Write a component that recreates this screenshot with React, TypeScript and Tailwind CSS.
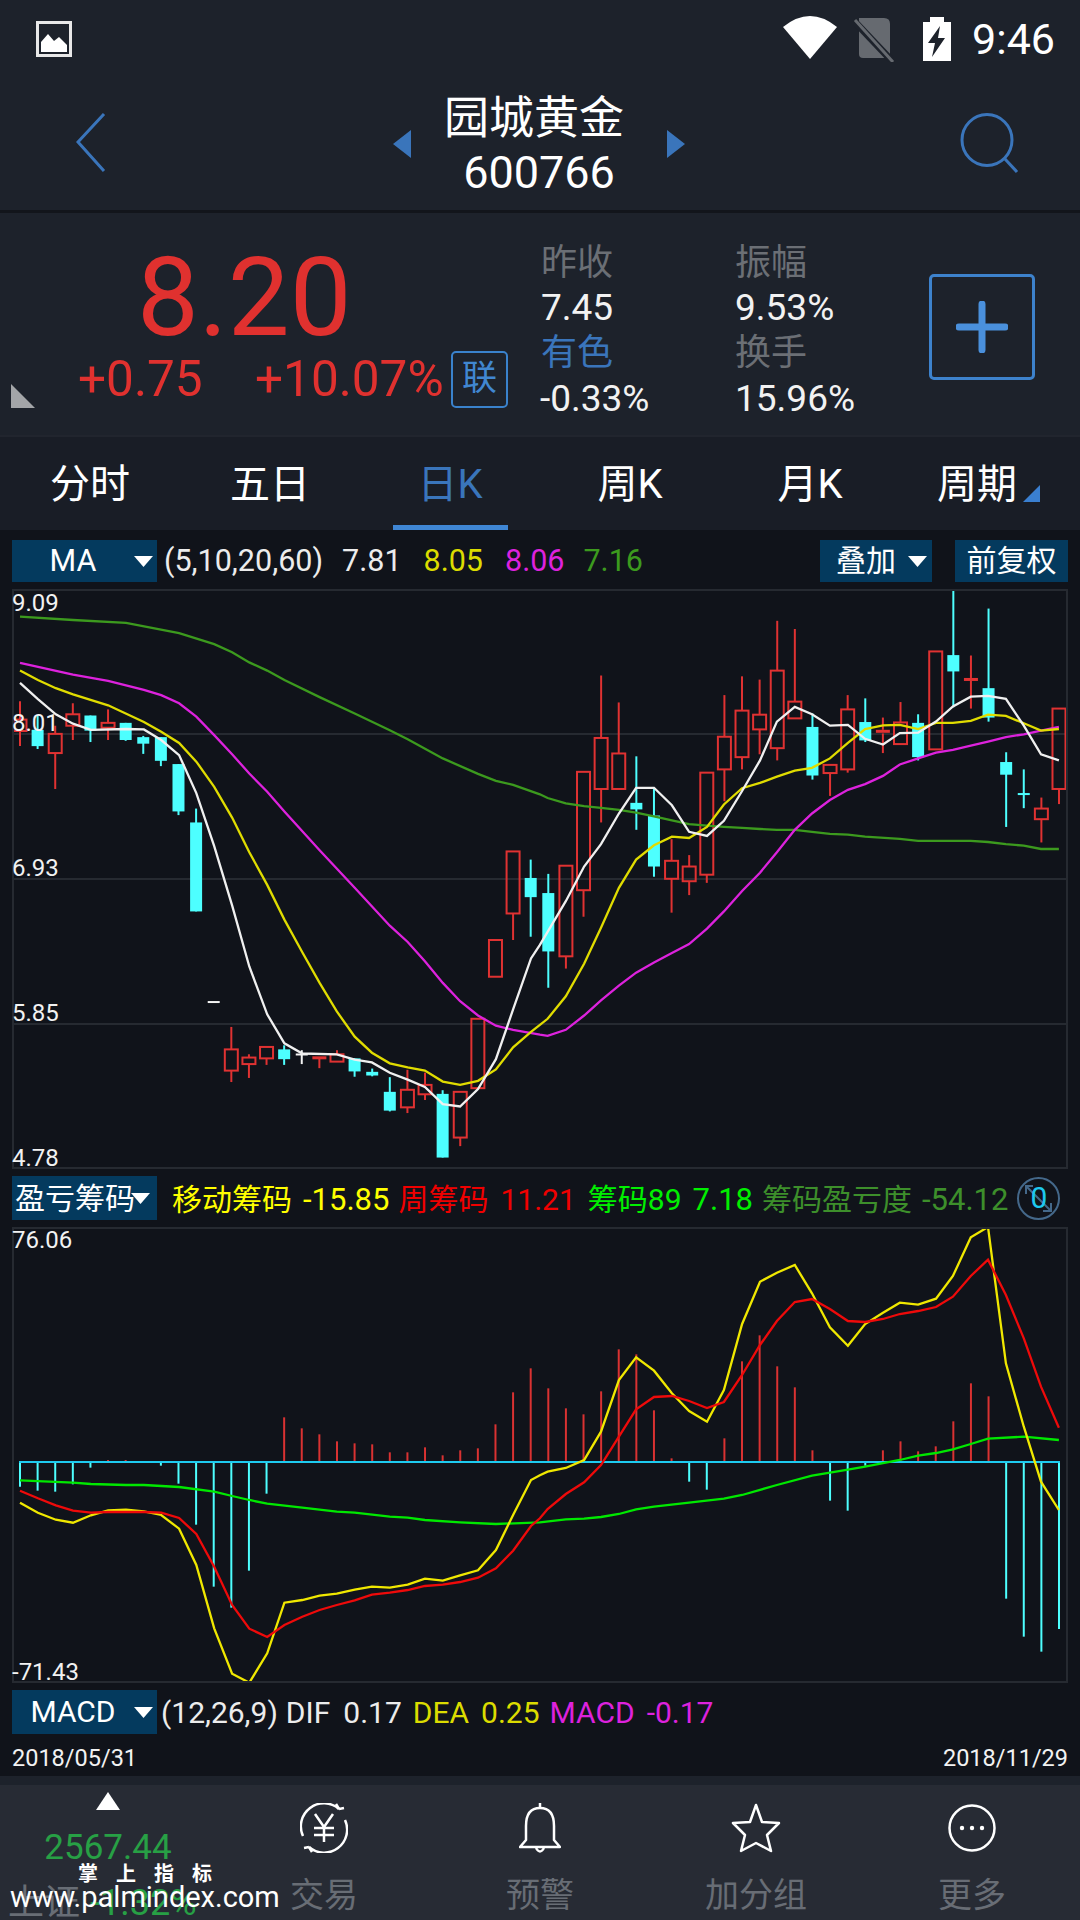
import React from "react";

const ix = (i: number) => 20 + 17.61 * i;
const xl = (z: number) => z / 2.904;
const xr = (z: number) => 540 + z / 2.904;
const y1 = (z: number) => 540 + z / 2.45;
const y2 = (z: number) => 1170 + z / 3;

type C = [number, number, number, number, "r" | "c" | "w"];
const candles: C[] = [
  [395,505,440,468,"r"],[430,512,465,505,"c"],[455,610,475,522,"r"],[400,490,427,455,"r"],[430,495,430,467,"c"],
  [415,490,448,460,"r"],[448,492,448,490,"c"],[480,524,483,499,"c"],[483,554,483,541,"c"],[549,674,549,665,"c"],
  [658,910,692,910,"c"],[1130,1134,1130,1134,"w"],[1193,1328,1248,1300,"r"],[1260,1318,1268,1284,"r"],[1242,1286,1242,1270,"r"],
  [1238,1286,1248,1272,"c"],[1250,1284,1259,1262,"w"],[1265,1294,1265,1270,"r"],[1250,1278,1260,1278,"r"],[1270,1315,1270,1302,"c"],
  [1295,1314,1303,1312,"c"],[1316,1400,1352,1398,"c"],[1298,1404,1347,1390,"r"],[1305,1372,1335,1358,"r"],[1348,1513,1357,1513,"c"],
  [1352,1485,1352,1464,"r"],[1173,1343,1173,1343,"r"],[980,1070,980,1070,"r"],[763,980,763,915,"r"],[783,972,828,875,"c"],
  [818,1097,865,1008,"c"],[798,1050,798,1020,"r"],[568,923,568,858,"r"],[332,692,485,610,"r"],[398,610,523,610,"r"],
  [530,710,644,660,"c"],[610,825,675,800,"c"],[733,913,786,830,"r"],[772,870,800,836,"r"],[570,840,570,820,"r"],
  [380,640,482,562,"r"],[334,562,418,532,"r"],[342,525,428,464,"r"],[198,540,320,510,"r"],[218,437,396,437,"r"],
  [425,587,458,577,"c"],[551,627,551,571,"r"],[380,570,415,562,"r"],[388,495,446,491,"c"],[435,522,465,474,"r"],
  [397,500,447,500,"r"],[427,540,448,532,"c"],[273,513,273,513,"r"],[120,410,282,322,"c"],[283,413,338,344,"r"],
  [168,445,363,435,"c"],[520,703,544,575,"c"],[562,657,620,624,"c"],[631,741,658,684,"r"],[413,647,413,610,"r"],
];

const pts = (left: number[], right: number[], fy: (z: number) => number) => {
  const out: string[] = [];
  for (let i = 0; i < left.length; i += 2) out.push(`${xl(left[i]).toFixed(1)},${fy(left[i + 1]).toFixed(1)}`);
  for (let i = 0; i < right.length; i += 2) out.push(`${xr(right[i]).toFixed(1)},${fy(right[i + 1]).toFixed(1)}`);
  return out.join(" ");
};

const maLines: [string, number[], number[]][] = [
  ["#3c9a1e",[58,188,212,196,366,203,520,228,622,255,674,275,724,300,776,320,826,343,928,385,1030,425,1132,466,1184,488,1286,535,1388,573,1440,590,1490,600,1568,623],
   [22,632,75,645,128,652,177,656,229,661,279,668,331,677,383,687,433,696,485,700,534,703,587,705,639,708,688,710,740,710,790,715,842,720,894,722,944,727,1045,732,1098,737,1150,737,1251,737,1301,740,1353,745,1405,749,1455,757,1507,757]],
  ["#dd22dd",[58,301,212,330,314,345,418,367,468,380,520,400,570,433,622,478,674,525,724,572,776,617,826,665,928,760,1030,852,1132,945,1184,985,1234,1032,1286,1085,1336,1130,1388,1165,1440,1190,1490,1200,1568,1212],
   [22,1215,75,1200,128,1165,177,1128,229,1092,279,1060,331,1035,383,1012,433,990,485,952,534,910,587,860,639,815,688,765,740,710,790,670,842,637,894,612,944,598,996,578,1045,550,1098,535,1150,521,1199,514,1251,504,1301,494,1353,483,1405,476,1455,467,1507,458]],
  ["#e0dc00",[58,320,110,343,162,363,212,378,314,405,418,446,468,470,520,497,570,543,622,605,674,680,724,765,776,845,826,930,878,1010,928,1085,978,1155,1030,1217,1080,1256,1132,1282,1184,1292,1234,1300,1286,1327,1336,1335,1388,1325,1440,1297,1490,1243,1542,1205,1568,1188],
   [22,1173,75,1118,128,1038,177,950,229,852,279,783,331,748,383,727,433,730,485,703,534,648,587,608,639,595,688,580,740,565,790,558,842,535,894,497,944,463,996,454,1045,453,1098,463,1150,448,1199,448,1251,443,1301,428,1353,431,1405,449,1455,467,1507,463]],
  ["#f0f0f0",[58,350,110,390,162,427,212,450,264,465,366,463,418,464,468,490,520,527,570,620,622,750,674,895,724,1045,776,1162,826,1233,878,1258,978,1260,1030,1273,1080,1280,1132,1305,1184,1322,1234,1340,1286,1382,1336,1388,1388,1345,1440,1272,1490,1150,1542,1025,1568,992],
   [22,960,75,885,128,800,177,745,229,670,279,607,331,607,383,650,433,715,485,725,534,688,587,615,639,540,688,445,740,409,790,427,842,455,894,453,944,487,996,501,1045,473,1098,472,1150,445,1199,408,1251,384,1301,382,1353,389,1405,455,1455,525,1507,540]],
];

const macdLines: [string, number[], number[]][] = [
  ["#00e800",[58,931,212,938,264,942,366,945,418,945,520,951,622,965,674,978,724,990,776,1001,878,1013,978,1025,1030,1028,1132,1040,1184,1043,1234,1050,1336,1057,1440,1062,1568,1057],
   [75,1048,128,1046,177,1041,229,1032,279,1018,331,1010,433,998,534,986,587,975,688,945,790,917,894,899,944,890,1045,870,1098,857,1150,849,1199,838,1251,822,1301,806,1405,800,1507,810]],
  ["#f0e800",[58,998,110,1028,162,1049,212,1058,264,1036,314,1021,366,1019,418,1024,468,1035,520,1076,570,1185,622,1375,674,1511,724,1538,776,1450,826,1298,878,1290,928,1277,978,1271,1030,1259,1080,1250,1132,1253,1184,1244,1234,1226,1286,1232,1336,1216,1388,1201,1440,1140,1490,1035,1542,930,1568,916],
   [22,905,75,894,128,870,177,785,229,630,279,562,331,602,383,670,433,723,485,755,534,660,587,462,639,335,688,308,740,285,790,370,842,472,894,527,944,462,996,428,1045,398,1098,404,1150,386,1199,318,1251,202,1301,171,1353,580,1405,770,1455,935,1507,1020]],
  ["#ee0a0a",[58,962,110,985,162,1006,212,1022,264,1028,314,1026,418,1026,468,1028,520,1044,570,1092,622,1190,674,1305,724,1376,776,1401,826,1365,878,1340,928,1320,978,1305,1030,1291,1080,1274,1132,1268,1184,1260,1234,1248,1286,1244,1336,1236,1388,1223,1440,1195,1490,1142,1542,1068,1568,1045],
   [22,1017,75,972,128,937,177,885,229,800,279,718,331,681,383,678,433,693,485,714,534,696,587,615,639,525,688,453,740,396,790,387,842,417,894,453,944,456,996,447,1045,432,1098,423,1150,411,1199,380,1251,318,1301,269,1353,375,1405,505,1455,650,1507,773]],
];

const hist = [950,962,965,943,893,870,870,876,887,941,1064,1250,1313,1202,971,742,775,793,814,820,823,847,847,832,856,841,835,763,667,595,
  655,715,733,664,538,553,721,865,935,959,805,574,496,589,652,841,992,1022,887,841,814,844,829,754,640,679,1286,1400,1445,1377];

const RED = "#e03232";
const CYAN = "#4dffff";

function Candles() {
  return (
    <>
      {candles.map(([wt, wb, bt, bb, k], i) => {
        const x = ix(i);
        if (k === "w") {
          return (
            <g key={i} stroke="#f4f4f4" strokeWidth={2}>
              {wb - wt > 10 && <line x1={x} x2={x} y1={y1(wt)} y2={y1(wb)} />}
              <line x1={x - 6} x2={x + 6} y1={y1((bt + bb) / 2)} y2={y1((bt + bb) / 2)} />
            </g>
          );
        }
        if (k === "c") {
          return (
            <g key={i}>
              <line x1={x} x2={x} y1={y1(wt)} y2={y1(wb)} stroke={CYAN} strokeWidth={2} />
              <rect x={x - 6} y={y1(bt)} width={12} height={Math.max(y1(bb) - y1(bt), 2)} fill={CYAN} />
            </g>
          );
        }
        const thin = bb - bt < 10;
        return (
          <g key={i} stroke={RED} strokeWidth={2}>
            {wt < bt && <line x1={x} x2={x} y1={y1(wt)} y2={y1(bt)} />}
            {wb > bb && <line x1={x} x2={x} y1={y1(bb)} y2={y1(wb)} />}
            {thin ? (
              <rect x={x - 7} y={y1(bt)} width={14} height={3} fill={RED} stroke="none" />
            ) : (
              <rect x={x - 6.5} y={y1(bt)} width={13} height={y1(bb) - y1(bt)} fill="none" />
            )}
          </g>
        );
      })}
    </>
  );
}

function Caret({ className }: { className: string }) {
  return (
    <svg width="19" height="12" viewBox="0 0 19 12" className={`block ${className}`}>
      <path d="M0 1 H19 L9.5 12 Z" fill="#fff" />
    </svg>
  );
}

function DropBox({ label, textW }: { label: string; textW: string }) {
  return (
    <div className="w-[145px] h-full bg-[#043a5e] flex items-center text-white shrink-0">
      <span className={`${textW} text-center`}>{label}</span>
      <Caret className="shrink-0" />
    </div>
  );
}

function StatusIcons() {
  return (
    <div className="flex items-center">
      <svg width="56" height="44" viewBox="0 0 56 44" className="block mb-[2px]">
        <path d="M28 43 L1 11 Q28 -11 55 11 Z" fill="#fff" />
      </svg>
      <svg width="42" height="46" viewBox="0 0 42 46" className="ml-[15px] block">
        <path d="M6 2 H31 Q37 2 37 8 V38 Q37 42 33 42 H10 Q6 42 6 38 Z" fill="#666a70" />
        <path d="M1 5 L38 44" stroke="#1d222b" strokeWidth="7" />
        <path d="M2 4 L40 46" stroke="#666a70" strokeWidth="3" />
      </svg>
      <svg width="30" height="44" viewBox="0 0 30 44" className="ml-[27px] block">
        <path d="M8 0 H22 V5 H29 V44 H1 V5 H8 Z" fill="#fff" />
        <path d="M18 9 L6 26 H13 L10 40 L23 21 H16 Z" fill="#1d222b" />
      </svg>
    </div>
  );
}

function Panel({ h, top, inner, labels, children }: { h: string; top: number; inner: number; labels: [string, string][]; children: React.ReactNode }) {
  return (
    <div className={`${h} relative mx-[12px] border-2 border-[#262a31]`}>
      <svg width="1052" height={inner} viewBox={`14 ${top + 2} 1052 ${inner}`} className="block">
        {children}
      </svg>
      {labels.map(([t, cls]) => (
        <span key={t} className={`absolute left-[-2px] text-[24px] leading-[28px] text-[#f2f2f2] ${cls}`}>{t}</span>
      ))}
    </div>
  );
}

function Nav({ label, children }: { label: string; children: React.ReactNode }) {
  return (
    <div className="w-[216px] flex flex-col items-center pt-[17px]">
      <div className="h-[52px] flex items-center justify-center shrink-0">{children}</div>
      <span className="mt-[21px] text-[34px] leading-[40px] text-[#686d75] shrink-0">{label}</span>
    </div>
  );
}

export default function App() {
  return (
    <div className="w-[1080px] h-[1920px] overflow-hidden bg-[#1d222b] flex flex-col [font-family:Roboto,'Noto_Sans_CJK_SC',sans-serif]">
      {/* status bar */}
      <div className="h-[78px] shrink-0 flex items-center justify-between pl-[36px] pr-[25px]">
        <svg width="36" height="36" viewBox="0 0 36 36" className="block">
          <rect x="1.5" y="1.5" width="33" height="33" fill="none" stroke="#e8e8e8" strokeWidth="3" />
          <rect x="5" y="25" width="26" height="6" fill="#fff" />
          <path d="M5 26 V21 L12 13 L18 20 L23 16 L31 24 V26 Z" fill="#fff" />
        </svg>
        <div className="flex items-center">
          <StatusIcons />
          <span className="ml-[20px] text-[43px] leading-[44px] text-white">9:46</span>
        </div>
      </div>

      {/* title */}
      <div className="h-[135px] shrink-0 flex items-center pl-[76px] pr-[60px] border-b-[3px] border-[#12151b]">
        <svg width="30" height="60" viewBox="0 0 30 60" className="block shrink-0 mb-[2px]">
          <path d="M28 1 L2 29 L28 58" fill="none" stroke="#3a75bb" strokeWidth="3" />
        </svg>
        <div className="flex-1 flex items-center justify-center ml-[12px]">
          <svg width="20" height="28" viewBox="0 0 20 28" className="block"><path d="M19 0 V28 L1 14 Z" fill="#3a75bb" /></svg>
          <div className="w-[254px] flex flex-col items-center text-white mt-[3px]">
            <span className="text-[45px] leading-[52px] mr-[10px]">园城黄金</span>
            <span className="text-[45px] leading-[52px] mt-[2px]">600766</span>
          </div>
          <svg width="20" height="28" viewBox="0 0 20 28" className="block"><path d="M1 0 V28 L19 14 Z" fill="#3a75bb" /></svg>
        </div>
        <svg width="60" height="60" viewBox="0 0 60 60" className="block shrink-0 mb-[2px]">
          <ellipse cx="27" cy="27" rx="25" ry="25.5" fill="none" stroke="#3a75bb" strokeWidth="3" />
          <path d="M45 46 L57 59" stroke="#3a75bb" strokeWidth="3" />
        </svg>
      </div>

      {/* quote */}
      <div className="h-[222px] shrink-0 relative flex">
        <svg width="24" height="24" viewBox="0 0 24 24" className="absolute left-[11px] top-[171px] block">
          <path d="M0 0 L24 24 H0 Z" fill="#a3a5a8" />
        </svg>
        <div className="w-[541px] pl-[78px] pt-[40px] shrink-0">
          <div className="pl-[59px] h-[90px] text-[110px] leading-[90px] text-[#e0312f]">8.20</div>
          <div className="mt-[6px] h-[60px] flex items-center text-[#e0312f] text-[49.5px]">
            <span className="w-[124px] leading-[60px]">+0.75</span>
            <span className="ml-[53px] w-[187px] leading-[60px] whitespace-nowrap">+10.07%</span>
            <span className="ml-[9px] w-[57px] h-[57px] rounded-[5px] border-2 border-[#3a82cc] flex items-center justify-center text-[35px] leading-[40px] text-[#4187d1] shrink-0">联</span>
          </div>
        </div>
        <div className="w-[388px] shrink-0 pt-[27px] grid grid-cols-[194px_194px] auto-rows-[45.33px] items-center text-[#f2f2f2] text-[37px] leading-[42px]">
          <span className="text-[36px] text-[#6b6f75]">昨收</span>
          <span className="text-[36px] text-[#6b6f75]">振幅</span>
          <span>7.45</span>
          <span>9.53%</span>
          <span className="text-[36px] text-[#3a75bb]">有色</span>
          <span className="text-[36px] text-[#6b6f75]">换手</span>
          <span className="-ml-[1px]">-0.33%</span>
          <span>15.96%</span>
        </div>
        <div className="mt-[61px] w-[106px] h-[106px] rounded-[5px] border-[3px] border-[#3d82cc] flex items-center justify-center shrink-0">
          <svg width="52" height="52" viewBox="0 0 52 52" className="block">
            <path d="M26 3 V49 M3 26 H49" stroke="#4a90dc" strokeWidth="7" strokeLinecap="round" />
          </svg>
        </div>
      </div>

      {/* tabs */}
      <div className="h-[95px] shrink-0 bg-[#191d26] border-t-2 border-[#21252e] flex relative">
        {["分时", "五日", "日K", "周K", "月K"].map((t, i) => (
          <div key={t} className={`w-[180px] flex justify-center items-center text-[40px] pt-[2px] ${i === 2 ? "text-[#3a75bb]" : "text-white"}`}>{t}</div>
        ))}
        <div className="flex-1 flex items-center text-[40px] text-white pl-[37px] pt-[2px]">
          <span className="whitespace-nowrap">周期</span>
          <svg width="17" height="17" viewBox="0 0 17 17" className="block mt-[18px] ml-[6px] shrink-0"><path d="M17 0 V17 H0 Z" fill="#3a7fd0" /></svg>
        </div>
        <div className="absolute left-[393px] bottom-0 w-[115px] h-[5px] bg-[#3f86d4]" />
      </div>

      {/* chart block */}
      <div className="h-[1246px] shrink-0 bg-[#10131a] flex flex-col pt-[10px]">
        <div className="h-[42px] mx-[12px] flex items-center text-[30.5px] leading-[42px] whitespace-nowrap">
          <DropBox label="MA" textW="w-[122px]" />
          <span className="ml-[7px] text-[#ececec]">(5,10,20,60)</span>
          <span className="ml-[19px] text-[#ececec]">7.81</span>
          <span className="ml-[22px] text-[#dcdc00]">8.05</span>
          <span className="ml-[22px] text-[#dd22dd]">8.06</span>
          <span className="ml-[19px] text-[#3c9a1e]">7.16</span>
          <div className="ml-auto h-full w-[112px] bg-[#043a5e] flex items-center text-white shrink-0 text-[30px]">
            <span className="w-[76px] text-right">叠加</span>
            <Caret className="ml-[12px] shrink-0" />
          </div>
          <div className="ml-[23px] h-full w-[113px] bg-[#043a5e] flex items-center justify-center text-white shrink-0 text-[30px]">前复权</div>
        </div>

        <div className="mt-[7px]">
          <Panel h="h-[580px]" top={589} inner={576} labels={[["9.09","top-[-2px]"],["8.01","top-[118px]"],["6.93","top-[263px]"],["5.85","top-[408px]"],["4.78","top-[553px]"]]}>
            {[734, 879, 1024].map((y) => <line key={y} x1="12" x2="1068" y1={y} y2={y} stroke="#262a31" strokeWidth="2" />)}
            <Candles />
            {maLines.map(([c, l, r]) => <polyline key={c} points={pts(l, r, y1)} fill="none" stroke={c} strokeWidth="2.3" />)}
          </Panel>
        </div>

        <div className="mt-[7px] h-[44px] mx-[12px] flex items-center text-[30px] leading-[44px] whitespace-nowrap">
          <div className="w-[145px] h-full bg-[#043a5e] flex items-center text-white shrink-0 pl-[3px]">
            <span className="w-[118px] pt-[2px]">盈亏筹码</span>
            <Caret className="shrink-0 ml-[-2px]" />
          </div>
          <span className="ml-[15px] pt-[3px] text-[#ffff00]">移动筹码</span>
          <span className="ml-[11px] pt-[3px] text-[31px] text-[#ffff00]">-15.85</span>
          <span className="ml-[9px] pt-[3px] text-[#f00000]">周筹码</span>
          <span className="ml-[12px] pt-[3px] text-[#f00000]">11.21</span>
          <span className="ml-[12px] pt-[3px] text-[#00f000]">筹码89</span>
          <span className="ml-[11px] pt-[3px] text-[31px] text-[#00f000]">7.18</span>
          <span className="ml-[9px] pt-[3px] text-[#3d8f2b]">筹码盈亏度</span>
          <span className="ml-[10px] pt-[3px] text-[31px] text-[#3d8f2b]">-54.12</span>
          <div className="ml-[9px] w-[43px] h-[43px] shrink-0 rounded-full border-2 border-[#44688a] flex items-center justify-center relative text-[#1ec8f0] text-[30px] leading-[36px]">
            <svg width="28" height="28" viewBox="0 0 28 28" className="absolute left-[6px] top-[6px] block">
              <path d="M1 9 V1 H8 M1 1 L26 26 M26 18 V26 H18" fill="none" stroke="#44688a" strokeWidth="2" />
            </svg>
            <span className="relative">0</span>
          </div>
        </div>

        <div className="mt-[7px]">
          <Panel h="h-[456px]" top={1227} inner={452} labels={[["76.06","top-[-3px]"],["-71.43","top-[429px]"]]}>
            {hist.map((z, i) => {
              const up = z < 876;
              const x = ix(i);
              return <line key={i} x1={x} x2={x} y1={1462} y2={y2(z)} stroke={up ? "#d93232" : CYAN} strokeWidth="2" />;
            })}
            <line x1="19" x2="1060" y1="1462" y2="1462" stroke="#1ecbf0" strokeWidth="2" />
            {macdLines.map(([c, l, r]) => <polyline key={c} points={pts(l, r, y2)} fill="none" stroke={c} strokeWidth="2.3" />)}
          </Panel>
        </div>

        <div className="mt-[7px] h-[44px] mx-[12px] flex items-center text-[30px] leading-[44px] whitespace-nowrap">
          <DropBox label="MACD" textW="w-[122px]" />
          <span className="ml-[4px] pt-[1px] text-[#ececec]">(12,26,9)</span>
          <span className="ml-[8px] pt-[1px] text-[#ececec]">DIF</span>
          <span className="ml-[13px] pt-[1px] text-[#ececec]">0.17</span>
          <span className="ml-[11px] pt-[1px] text-[#dcdc00]">DEA</span>
          <span className="ml-[12px] pt-[1px] text-[#dcdc00]">0.25</span>
          <span className="ml-[10px] pt-[1px] text-[#dd22dd]">MACD</span>
          <span className="ml-[12px] pt-[1px] text-[#dd22dd]">-0.17</span>
        </div>

        <div className="mt-[7px] mx-[12px] h-[2px] bg-[#262a31]" />
        <div className="flex-1 mx-[12px] flex items-center justify-between text-[23.5px] text-[#f2f2f2] pb-[3px]">
          <span>2018/05/31</span>
          <span>2018/11/29</span>
        </div>
      </div>

      <div className="h-[9px] shrink-0 bg-[#1d222b]" />

      {/* bottom nav */}
      <div className="h-[135px] shrink-0 bg-[#272b34] flex relative overflow-hidden">
        <div className="w-[216px] flex flex-col items-center relative">
          <svg width="24" height="18" viewBox="0 0 24 18" className="block mt-[7px] shrink-0"><path d="M12 0 L24 18 H0 Z" fill="#fff" /></svg>
          <span className="mt-[17px] text-[35px] leading-[42px] text-[#27a045] shrink-0">2567.44</span>
          <div className="mt-[13px] flex items-center text-[36px] leading-[42px] pl-[8px] w-full whitespace-nowrap shrink-0">
            <span className="text-[#686d75] w-[82px]">上证</span>
            <span className="text-[#27a045]">-1.32%</span>
          </div>
          <div className="absolute left-0 top-[78px] w-[300px] flex flex-col">
            <span className="ml-[78px] text-[20px] leading-[22px] font-bold text-white tracking-[18px] whitespace-nowrap">掌上指标</span>
            <span className="ml-[10px] mt-[-4px] text-[29px] leading-[32px] text-white whitespace-nowrap">www.palmindex.com</span>
          </div>
        </div>
        <Nav label="交易">
          <svg width="48" height="50" viewBox="0 0 48 50" className="block">
            <path d="M3 33 A23 23 0 0 1 39 6 M45 17 A23 23 0 0 1 9 44" fill="none" stroke="#fff" strokeWidth="2.5" />
            <path d="M39 6 L36 1 M39 6 L44 5 M9 44 L12 49 M9 44 L4 45" fill="none" stroke="#fff" strokeWidth="2.5" />
            <path d="M15 11 L24 24 L33 11 M24 24 V39 M14 25 H34 M14 32 H34" fill="none" stroke="#fff" strokeWidth="2.5" />
          </svg>
        </Nav>
        <Nav label="预警">
          <svg width="42" height="52" viewBox="0 0 42 52" className="block">
            <path d="M21 6 C10 6 7 14 7 24 V38 L1 45 H41 L35 38 V24 C35 14 32 6 21 6 Z" fill="none" stroke="#fff" strokeWidth="2.5" strokeLinejoin="round" />
            <path d="M21 6 V1 M17 46 Q21 53 25 46" fill="none" stroke="#fff" strokeWidth="2.5" />
          </svg>
        </Nav>
        <Nav label="加分组">
          <svg width="50" height="50" viewBox="0 0 50 50" className="block">
            <path d="M25 2 L31 19 L48 20 L36 32 L40 48 L25 40 L10 48 L14 32 L2 20 L19 19 Z" fill="none" stroke="#fff" strokeWidth="2.5" strokeLinejoin="round" />
          </svg>
        </Nav>
        <Nav label="更多">
          <svg width="48" height="48" viewBox="0 0 48 48" className="block">
            <circle cx="24" cy="24" r="22.5" fill="none" stroke="#fff" strokeWidth="2.5" />
            <circle cx="14" cy="24" r="2.2" fill="#fff" />
            <circle cx="24" cy="24" r="2.2" fill="#fff" />
            <circle cx="34" cy="24" r="2.2" fill="#fff" />
          </svg>
        </Nav>
      </div>
    </div>
  );
}
